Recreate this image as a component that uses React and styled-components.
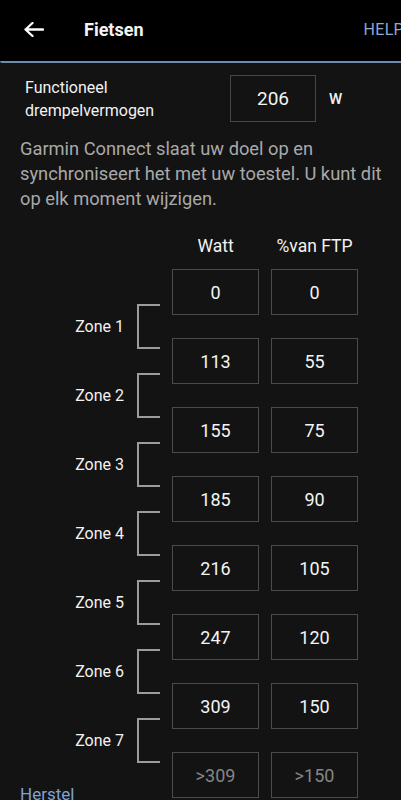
import React from 'react'
import styled, { createGlobalStyle } from 'styled-components'

const zones = [
  { watt: '0', ftp: '0' },
  { watt: '113', ftp: '55' },
  { watt: '155', ftp: '75' },
  { watt: '185', ftp: '90' },
  { watt: '216', ftp: '105' },
  { watt: '247', ftp: '120' },
  { watt: '309', ftp: '150' },
  { watt: '>309', ftp: '>150', muted: true },
]

const App = () => {
  return (
    <>
      <GlobalStyle />
      <Screen>
        <Header>
          <BackButton>
            <svg width="20" height="15" viewBox="0 0 20 15">
              <path d="M1.5 7.5H19M8.5 1L1.5 7.5L8.5 14" fill="none" stroke="#fff" strokeWidth="2.3" strokeLinecap="round" strokeLinejoin="round" />
            </svg>
          </BackButton>
          <Title>Fietsen</Title>
          <HelpLink>HELP</HelpLink>
        </Header>
        <Content>
          <FtpRow>
            <FtpLabel>Functioneel<br />drempelvermogen</FtpLabel>
            <FtpBox>206</FtpBox>
            <Unit>W</Unit>
          </FtpRow>
          <Description>
            Garmin Connect slaat uw doel op en synchroniseert het met uw toestel. U kunt dit op elk moment wijzigen.
          </Description>
          <ZoneTable>
            <LeftColumn>
              <ZoneList>
                {[1, 2, 3, 4, 5, 6, 7].map((n) => (
                  <ZoneItem key={n}>
                    <ZoneLabel>Zone {n}</ZoneLabel>
                    <Bracket />
                  </ZoneItem>
                ))}
              </ZoneList>
              <ResetLink>Herstel</ResetLink>
            </LeftColumn>
            <ValueBlock>
              <HeadRow>
                <ColHead>Watt</ColHead>
                <ColHead>%van FTP</ColHead>
              </HeadRow>
              <BoxGrid>
                {zones.map((z, i) => (
                  <React.Fragment key={i}>
                    <ValueBox $muted={z.muted}>{z.watt}</ValueBox>
                    <ValueBox $muted={z.muted}>{z.ftp}</ValueBox>
                  </React.Fragment>
                ))}
              </BoxGrid>
            </ValueBlock>
          </ZoneTable>
        </Content>
      </Screen>
    </>
  )
}

const GlobalStyle = createGlobalStyle`
    html, body {
        margin: 0;
        padding: 0;
        background: #131313;
    }
    body {
        font-family: Roboto, "Noto Sans", "Liberation Sans", sans-serif;
        overflow: hidden;
    }
`

const Screen = styled.div`
    width: 401px;
    height: 800px;
    overflow: hidden;
    background: #131313;
    color: #f2f2f2;
`

const Header = styled.div`
    height: 61px;
    background: #000;
    display: flex;
    align-items: center;
    border-bottom: 2px solid #6b8cb0;
    border-bottom-left-radius: 2px;
`

const BackButton = styled.div`
    width: 20px;
    height: 15px;
    margin-left: 24px;
    margin-top: -3px;
    display: flex;
`

const Title = styled.div`
    margin-left: 40px;
    margin-top: -3px;
    font-size: 18px;
    font-weight: 700;
    color: #f4f4f4;
`

const HelpLink = styled.div`
    margin-left: auto;
    margin-right: -3px;
    margin-top: -3px;
    font-size: 16px;
    color: #8ea8d2;
    letter-spacing: 0.3px;
    white-space: nowrap;
`

const Content = styled.div`
    padding: 12px 10px 0 20px;
`

const FtpRow = styled.div`
    display: flex;
    align-items: center;
`

const FtpLabel = styled.div`
    width: 205px;
    padding-left: 5px;
    font-size: 16px;
    line-height: 23px;
    color: #f2f2f2;
`

const FtpBox = styled.div`
    width: 84px;
    height: 45px;
    border: 1.5px solid #474747;
    display: flex;
    align-items: center;
    justify-content: center;
    font-size: 19px;
    color: #f4f4f4;
`

const Unit = styled.div`
    margin-left: 13px;
    font-size: 15px;
    font-weight: 500;
    color: #f2f2f2;
`

const Description = styled.p`
    margin: 14px 0 0 0;
    font-size: 18.3px;
    line-height: 25px;
    color: #a9a9a9;
`

const ZoneTable = styled.div`
    display: flex;
    align-items: flex-start;
    margin-top: 20px;
`

const LeftColumn = styled.div`
    width: 140px;
    margin-right: 12px;
    padding-top: 73px;
`

const ZoneList = styled.div`
    display: flex;
    flex-direction: column;
    gap: 24px;
`

const ZoneItem = styled.div`
    height: 45px;
    display: flex;
    align-items: center;
    justify-content: flex-end;
`

const ZoneLabel = styled.div`
    font-size: 16px;
    color: #f2f2f2;
    margin-right: 13px;
`

const Bracket = styled.div`
    width: 21px;
    height: 41px;
    border: 2px solid #9c9c9c;
    border-right: none;
`

const ResetLink = styled.div`
    margin-top: 21px;
    font-size: 17px;
    line-height: 20px;
    color: #7ea2d6;
`

const ValueBlock = styled.div`
    display: flex;
    flex-direction: column;
`

const HeadRow = styled.div`
    display: grid;
    grid-template-columns: 87px 87px;
    column-gap: 12px;
    height: 30px;
    margin-bottom: 8px;
`

const ColHead = styled.div`
    text-align: center;
    line-height: 30px;
    font-size: 17.5px;
    color: #f2f2f2;
`

const BoxGrid = styled.div`
    display: grid;
    grid-template-columns: 87px 87px;
    column-gap: 12px;
    row-gap: 23px;
`

const ValueBox = styled.div`
    height: 46px;
    box-sizing: border-box;
    border: 1.5px solid #4b4b4b;
    display: flex;
    align-items: center;
    justify-content: center;
    font-size: 18px;
    color: ${(p) => (p.$muted ? '#858585' : '#f4f4f4')};
`

export default App
